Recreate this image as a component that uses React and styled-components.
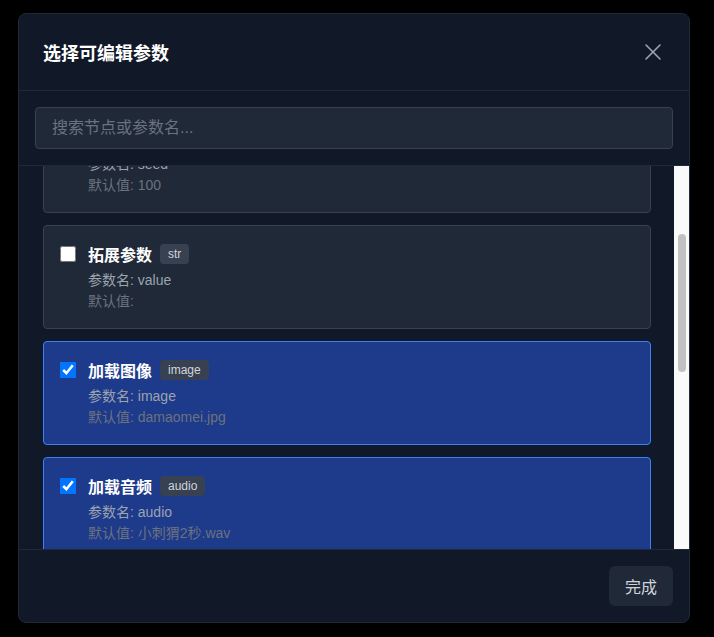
import React, { useEffect, useRef, useState } from 'react';
import styled, { createGlobalStyle } from 'styled-components';

const GlobalStyle = createGlobalStyle`
  html, body {
    margin: 0;
    background: #000;
  }
  * {
    box-sizing: border-box;
  }
  body {
    font-family: "Liberation Sans", "Noto Sans CJK SC", sans-serif;
  }
`;

const Page = styled.div`
  width: 714px;
  height: 637px;
  padding: 13px 0 0 18px;
`;

const Modal = styled.div`
  width: 672px;
  height: 610px;
  display: flex;
  flex-direction: column;
  background: #111827;
  border: 1px solid #1f2937;
  border-radius: 8px;
  overflow: hidden;
`;

const Header = styled.div`
  display: flex;
  align-items: center;
  justify-content: space-between;
  height: 77px;
  padding: 0 22px 0 24px;
  border-bottom: 1px solid #1f2937;
  flex-shrink: 0;
`;

const Title = styled.h2`
  margin: 0;
  font-size: 18px;
  font-weight: 700;
  color: #fff;
`;

const CloseButton = styled.button`
  display: flex;
  align-items: center;
  justify-content: center;
  width: 28px;
  height: 28px;
  padding: 0;
  border: 0;
  background: transparent;
  color: #9ca3af;
  cursor: pointer;
`;

const SearchBar = styled.div`
  padding: 16px;
  border-bottom: 1px solid #1f2937;
  flex-shrink: 0;
`;

const SearchInput = styled.input`
  width: 100%;
  height: 42px;
  padding: 0 16px;
  background: #1f2937;
  border: 1px solid #374151;
  border-radius: 4px;
  color: #e5e7eb;
  font-family: inherit;
  font-size: 16px;
  outline: none;

  &::placeholder {
    color: #6b7280;
  }
`;

const ScrollArea = styled.div`
  flex: 1;
  min-height: 0;
  display: flex;
`;

const List = styled.div`
  flex: 1;
  overflow-y: auto;
  scrollbar-width: none;
  padding: 16px 23px 16px 24px;
  display: flex;
  flex-direction: column;
  gap: 12px;

  &::-webkit-scrollbar {
    display: none;
  }
`;

const Track = styled.div`
  width: 15px;
  flex-shrink: 0;
  background: #fafafa;
  padding: 0 3px 0 4px;
`;

const Thumb = styled.div`
  width: 8px;
  background: #c1c1c1;
  border-radius: 4px;
`;

const Card = styled.label`
  display: flex;
  gap: 12px;
  flex-shrink: 0;
  height: 104px;
  padding: 16px;
  background: ${({ $selected }) => ($selected ? '#1e3a8a' : '#1f2937')};
  border: 1px solid ${({ $selected }) => ($selected ? '#3b82f6' : '#374151')};
  border-radius: 4px;
  cursor: pointer;
`;

const Check = styled.input`
  width: 16px;
  height: 16px;
  margin: 4px 0 0;
  flex-shrink: 0;
`;

const Body = styled.div`
  display: flex;
  flex-direction: column;
`;

const TitleRow = styled.div`
  display: flex;
  align-items: center;
  gap: 8px;
  height: 24px;
  margin-bottom: 4px;
`;

const NodeName = styled.span`
  font-size: 16px;
  font-weight: 700;
  color: #fff;
`;

const TypeBadge = styled.span`
  display: inline-flex;
  align-items: center;
  height: 20px;
  padding: 0 8px;
  background: #374151;
  border-radius: 4px;
  font-size: 12px;
  color: #d1d5db;
`;

const InfoLine = styled.div`
  font-size: 14px;
  line-height: 21px;
  color: ${({ $muted }) => ($muted ? '#6b7280' : '#9ca3af')};
`;

const Footer = styled.div`
  display: flex;
  justify-content: flex-end;
  padding: 16px;
  border-top: 1px solid #1f2937;
  flex-shrink: 0;
`;

const DoneButton = styled.button`
  height: 40px;
  padding: 0 16px;
  background: #1f2937;
  border: 0;
  border-radius: 6px;
  color: #d1d5db;
  font-family: inherit;
  font-size: 16px;
  cursor: pointer;
`;

const params = [
  { node: '正向提示词', type: 'text', name: 'text', value: 'a cute cat' },
  { node: '随机种子', type: 'int', name: 'seed', value: '100' },
  { node: '拓展参数', type: 'str', name: 'value', value: '' },
  { node: '加载图像', type: 'image', name: 'image', value: 'damaomei.jpg', selected: true },
  { node: '加载音频', type: 'audio', name: 'audio', value: '小刺猬2秒.wav', selected: true },
  { node: '采样步数', type: 'int', name: 'steps', value: '20' },
  { node: 'CFG 强度', type: 'float', name: 'cfg', value: '7.5' },
  { node: '图像宽度', type: 'int', name: 'width', value: '512' },
  { node: '图像高度', type: 'int', name: 'height', value: '512' },
];

const CloseIcon = () => (
  <svg width="24" height="24" viewBox="0 0 24 24" fill="none" stroke="currentColor" strokeWidth="1.6" strokeLinecap="round">
    <path d="M19 5 5 19" />
    <path d="m5 5 14 14" />
  </svg>
);

const App = () => {
  const listRef = useRef(null);
  const [thumb, setThumb] = useState({ top: 0, height: 0 });

  useEffect(() => {
    const el = listRef.current;
    if (!el) return;
    const update = () => {
      const ratio = el.clientHeight / el.scrollHeight;
      setThumb({
        top: el.scrollTop * ratio,
        height: el.clientHeight * ratio,
      });
    };
    el.scrollTop = 189;
    update();
    el.addEventListener('scroll', update);
    return () => el.removeEventListener('scroll', update);
  }, []);

  return (
    <>
      <GlobalStyle />
      <Page>
        <Modal>
          <Header>
            <Title>选择可编辑参数</Title>
            <CloseButton aria-label="关闭">
              <CloseIcon />
            </CloseButton>
          </Header>
          <SearchBar>
            <SearchInput placeholder="搜索节点或参数名..." />
          </SearchBar>
          <ScrollArea>
            <List ref={listRef}>
              {params.map((p) => (
                <Card key={p.name + p.node} $selected={p.selected}>
                  <Check type="checkbox" defaultChecked={!!p.selected} />
                  <Body>
                    <TitleRow>
                      <NodeName>{p.node}</NodeName>
                      <TypeBadge>{p.type}</TypeBadge>
                    </TitleRow>
                    <InfoLine>参数名: {p.name}</InfoLine>
                    <InfoLine $muted>默认值: {p.value}</InfoLine>
                  </Body>
                </Card>
              ))}
            </List>
            <Track>
              <Thumb style={{ marginTop: thumb.top, height: thumb.height }} />
            </Track>
          </ScrollArea>
          <Footer>
            <DoneButton>完成</DoneButton>
          </Footer>
        </Modal>
      </Page>
    </>
  );
};

export default App;
